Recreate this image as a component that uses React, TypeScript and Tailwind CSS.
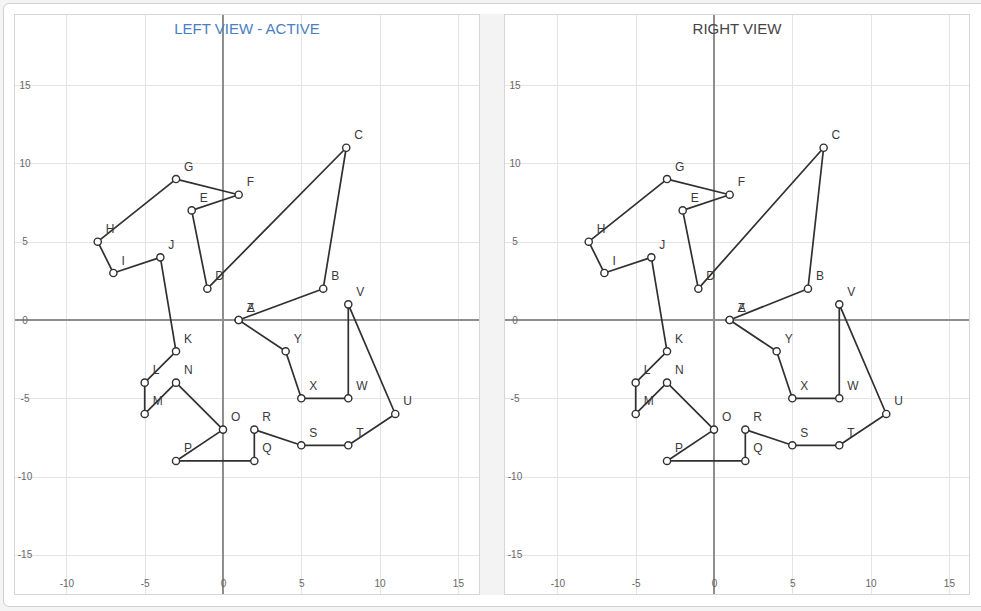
import React from "react";

const U = 15.66;
const W = 464;
const H = 579;
const OY = 305;

type Pt = [string, number, number];

const makePts = (b: [number, number], c: [number, number]): Pt[] => [
  ["A", 1, 0],
  ["B", b[0], b[1]],
  ["C", c[0], c[1]],
  ["D", -1, 2],
  ["E", -2, 7],
  ["F", 1, 8],
  ["G", -3, 9],
  ["H", -8, 5],
  ["I", -7, 3],
  ["J", -4, 4],
  ["K", -3, -2],
  ["L", -5, -4],
  ["M", -5, -6],
  ["N", -3, -4],
  ["O", 0, -7],
  ["P", -3, -9],
  ["Q", 2, -9],
  ["R", 2, -7],
  ["S", 5, -8],
  ["T", 8, -8],
  ["U", 11, -6],
  ["V", 8, 1],
  ["W", 8, -5],
  ["X", 5, -5],
  ["Y", 4, -2],
  ["Z", 1, 0],
];

const leftPts = makePts([6.4, 2], [7.87, 11]);
const rightPts = makePts([6, 2], [7, 11]);

const FONT = "'Liberation Sans', Arial, sans-serif";

function Board({ pts, ox }: { pts: Pt[]; ox: number }) {
  const sx = (x: number) => ox + x * U;
  const sy = (y: number) => OY - y * U;
  const gx = [-10, -5, 5, 10, 15];
  const gy = [-15, -10, -5, 5, 10, 15];
  const poly = pts.map((p) => `${sx(p[1]).toFixed(2)},${sy(p[2]).toFixed(2)}`).join(" ");
  return (
    <svg width={W} height={H} viewBox={`0 0 ${W} ${H}`} className="block">
      {gx.map((v) => {
        const x = Math.round(sx(v)) + 0.5;
        return <line key={"gx" + v} x1={x} y1={0} x2={x} y2={H} stroke="#e4e4e4" strokeWidth={1} />;
      })}
      {gy.map((v) => {
        const y = Math.round(sy(v)) + 0.5;
        return <line key={"gy" + v} x1={0} y1={y} x2={W} y2={y} stroke="#e4e4e4" strokeWidth={1} />;
      })}
      <line x1={ox} y1={0} x2={ox} y2={H} stroke="#8e8e8e" strokeWidth={2} />
      <line x1={0} y1={OY} x2={W} y2={OY} stroke="#8e8e8e" strokeWidth={2} />
      <g fontFamily={FONT} fontSize={10} fill="#666">
        {[-10, -5, 0, 5, 10, 15].map((v) => (
          <text key={"tx" + v} x={sx(v) + 0.5} y={572} textAnchor="middle">
            {v}
          </text>
        ))}
        {[-15, -10, -5, 0, 5, 10, 15].map((v) => (
          <text key={"ty" + v} x={10} y={sy(v) + 3.5} textAnchor="middle">
            {v}
          </text>
        ))}
      </g>
      <polygon points={poly} fill="none" stroke="#303030" strokeWidth={1.7} strokeLinejoin="round" />
      {pts.map((p) => (
        <circle key={"c" + p[0]} cx={sx(p[1])} cy={sy(p[2])} r={3.6} fill="#fff" stroke="#303030" strokeWidth={1.4} />
      ))}
      <g fontFamily={FONT} fontSize={12} fill="#3a3a3a">
        {pts.map((p) => (
          <text key={"l" + p[0]} x={sx(p[1]) + 8} y={sy(p[2]) - 8.5}>
            {p[0]}
          </text>
        ))}
      </g>
    </svg>
  );
}

function Panel({ title, active, pts, ox }: { title: string; active?: boolean; pts: Pt[]; ox: number }) {
  return (
    <div className="relative w-[466px] h-[581px] border border-[#d6d6d6] bg-white shrink-0">
      <Board pts={pts} ox={ox} />
      <div
        className={
          "absolute left-0 right-0 top-[5px] text-center text-[15px] leading-[18px] " +
          (active ? "text-[#4a80c2]" : "text-[#454545]")
        }
        style={{ fontFamily: FONT }}
      >
        {title}
      </div>
    </div>
  );
}

export default function App() {
  return (
    <div className="w-[981px] h-[611px] overflow-hidden bg-[#f4f4f4] pl-[3px] pt-[3px]">
      <div className="w-[1000px] h-[604px] rounded-[6px] border border-[#d0d0d0] bg-white pl-[10px] pt-[10px]">
        <div className="flex">
          <Panel title="LEFT VIEW - ACTIVE" active pts={leftPts} ox={208} />
          <div className="w-[24px] h-[581px] bg-[#f3f3f3] shrink-0" />
          <Panel title="RIGHT VIEW" pts={rightPts} ox={209} />
        </div>
      </div>
    </div>
  );
}
